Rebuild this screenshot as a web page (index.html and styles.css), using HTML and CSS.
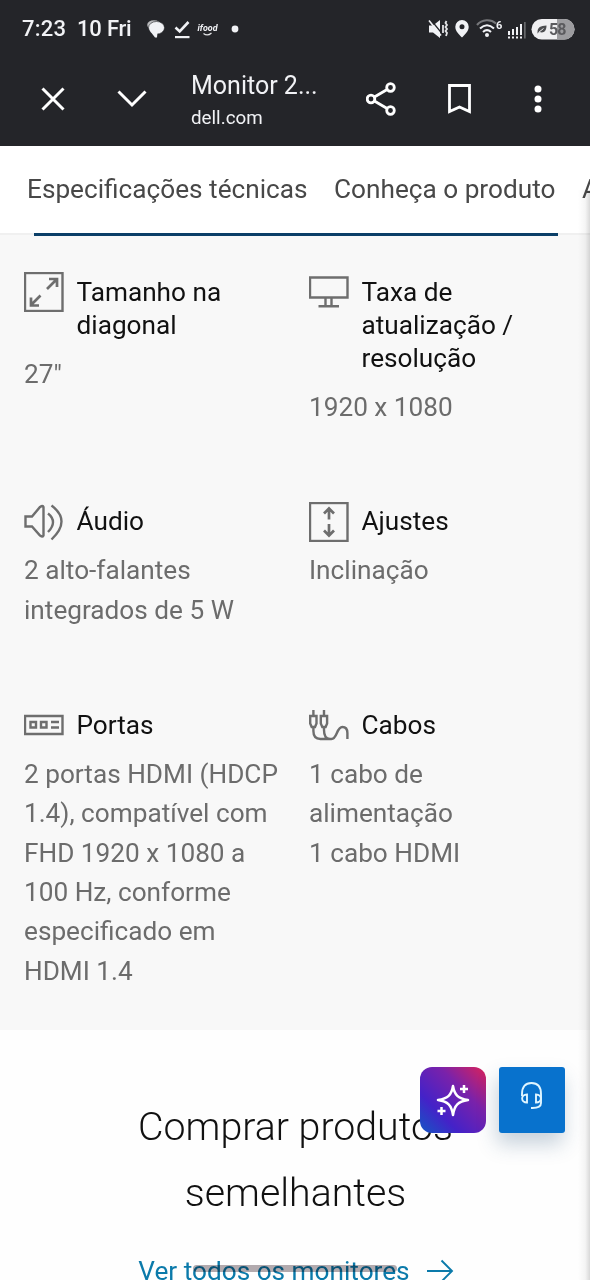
FILE: index.html
```html
<!DOCTYPE html>
<html lang="pt-BR">
<head>
<meta charset="utf-8">
<title>Monitor 27</title>
<link rel="stylesheet" href="styles.css">
</head>
<body>
<div class="screen">
  <header class="chrome">
    <div class="status">
      <span class="clock">7:23</span>
      <span class="date">10 Fri</span>
      <svg class="notif" width="96" height="24" viewBox="0 0 96 24" fill="#f1f2f5">
        <ellipse cx="9" cy="9" rx="6.800" ry="4.800" fill="#b9babc"/>
        <ellipse cx="11.500" cy="11.800" rx="8" ry="6.300" stroke="#242529" stroke-width=".6"/>
        <path d="M5 15l5 6.500h2l.5-5z"/>
        <path d="M30.500 11.500l4.200 4L43.500 6" fill="none" stroke="#f1f2f5" stroke-width="2.600"/>
        <rect x="30" y="20" width="14.500" height="2.200"/>
        <text class="ifood" x="52.500" y="15" textLength="20" lengthAdjust="spacingAndGlyphs">ifood</text>
        <path d="M58.500 17.500q4 3.200 8-.5" fill="none" stroke="#e2e3e5" stroke-width="1.200"/>
        <circle cx="90" cy="13" r="3.400"/>
      </svg>
      <svg class="system" width="148" height="24" viewBox="0 0 148 24" fill="#f1f2f5">
        <path d="M2 9.500h4l7-5.500v18l-7-5.500H2z"/>
        <path d="M4 4l11 13.500" stroke="#242529" stroke-width="1.200"/>
        <path d="M2 4.500l12 15" stroke="#f1f2f5" stroke-width="1.600"/>
        <path d="M16 9v8M19.500 5l-1 2 1.500 2-1.500 2 1.500 2-1.500 2 1.500 2-1 3" fill="none" stroke="#e2e3e5" stroke-width="1.800"/>
        <path fill-rule="evenodd" d="M35 4a6.700 6.700 0 0 1 6.700 6.700c0 4.500-4 8-6.700 10.800-2.700-2.800-6.700-6.300-6.700-10.800A6.700 6.700 0 0 1 35 4zm0 4.200a2.500 2.500 0 1 0 0 5 2.500 2.500 0 0 0 0-5z"/>
        <g fill="none" stroke-width="2.100"><path d="M50 9C55 3 64 3 69 7.500" stroke="#77787b"/><path d="M53 12.500q7-6.500 14 0M56 16q4-3.600 8 0" stroke="#f1f2f5"/></g>
        <circle cx="60" cy="19" r="2"/>
        <text class="wifi-six" x="69" y="12.500" textLength="6.500">6</text>
        <path d="M81 15h2v4h-2zM85 13h2v6h-2zM89 11h2v8h-2zM93 8h2v11h-2zM81 20.500h2v2h-2zM85 20.500h2v2h-2zM89 20.500h2v2h-2zM93 20.500h2v2h-2z"/>
        <path d="M97 6h1.700v16.500H97z" fill="#66676a"/>
        <rect x="104.500" y="3" width="43" height="20.500" rx="10.200" fill="#efeff1"/>
        <path d="M130 3h7.300a10.200 10.200 0 0 1 0 20.500H130z" fill="#9c9c9f"/>
        <path d="M110.500 16c0-5 3-6 9-6.500 0 6-3 8-7 6.500l-2 1.500z" fill="#4c4d50"/>
        <path d="M111.500 16.500l5-4" stroke="#efeff1"/>
        <text class="battery" x="122" y="19" textLength="17.500">58</text>
      </svg>
    </div>
    <div class="toolbar">
      <svg class="nav-icons" width="110" height="40" viewBox="0 0 110 40" fill="none" stroke="#fff" stroke-width="3">
        <path d="M2.500 9.500L23.500 30.500M23.500 9.500L2.500 30.500"/><path d="M78.500 12.500L92 26l13.500-13.500"/>
      </svg>
      <div class="page-info"><div class="page-title">Monitor 2...</div><div class="page-host">dell.com</div></div>
      <svg class="actions" width="180" height="40" viewBox="0 0 180 40" fill="none" stroke="#fff" stroke-width="2.800">
        <path d="M5 20L24.500 8.500M5 20l19.500 11.500"/>
        <g fill="#242529"><circle cx="24.500" cy="8.500" r="3.800"/><circle cx="5" cy="20" r="3.800"/><circle cx="24.500" cy="31.500" r="3.800"/></g>
        <path d="M83.500 6.500h20v26l-10-4.500-10 4.500z"/>
        <g fill="#fff" stroke="none"><circle cx="172" cy="10" r="3.500"/><circle cx="172" cy="20" r="3.500"/><circle cx="172" cy="30" r="3.500"/></g>
      </svg>
    </div>
  </header>
  <nav class="tabs">
    <span class="tab">Especificações técnicas</span><span class="tab">Conheça o produto</span><span class="tab">A</span>
    <div class="indicator"></div>
  </nav>
  <main class="specs">
    <section class="spec">
      <div class="head"><svg class="icon" viewBox="0 0 40 40"><rect x="1" y="1" width="37.500" height="38"/><path d="M23 17L32.500 7.500M25 7h8v8M16.500 23.500L7 33M7 25.500v8h8" stroke-width="2.700"/></svg><h2>Tamanho na diagonal</h2></div>
      <p>27"</p>
    </section>
    <section class="spec">
      <div class="head"><svg class="icon" viewBox="0 0 40 40"><path d="M1 5.500h37.500v20H1zM16.500 26v8M22.500 26v8M9.500 34.200h20.500"/></svg><h2>Taxa de atualização / resolução</h2></div>
      <p>1920 x 1080</p>
    </section>
    <section class="spec">
      <div class="head"><svg class="icon" viewBox="0 0 40 40"><path d="M1.500 14.500H8L16 5q3-2 3.500 0v28.500q-.5 2-3.500 0L8 24.500H1.500zM24 11.500q10 8 0 18.500M27.500 3.500q20 15 0 34"/></svg><h2>Áudio</h2></div>
      <p>2 alto-falantes<br>integrados de 5 W</p>
    </section>
    <section class="spec">
      <div class="head"><svg class="icon" viewBox="0 0 40 40"><rect x="1" y="1" width="37.500" height="38"/><path d="M20 17.500V7M15 11.500L20 6.500l5 5M20 22v11.500M15 28.500l5 5 5-5" stroke-width="2.700"/></svg><h2>Ajustes</h2></div>
      <p>Inclinação</p>
    </section>
    <section class="spec">
      <div class="head"><svg class="icon" viewBox="0 0 40 40"><path d="M1 11h37.500v18H1zM6.500 17h5.500v5.500H6.500zM17 17h5.500v5.500h-5.500zM27 17h8M27 22.500h8"/></svg><h2>Portas</h2></div>
      <p>2 portas HDMI (HDCP<br>1.4), compatível com<br>FHD 1920 x 1080 a<br>100 Hz, conforme<br>especificado em<br>HDMI 1.4</p>
    </section>
    <section class="spec">
      <div class="head"><svg class="icon" viewBox="0 0 40 40"><path d="M1.200 11h6.300v7.500L6 22H2.700l-1.500-3.500zM11.800 11h6.300v7.500L16.600 22h-3.300l-1.500-3.500zM4.400 5v6M15 5v6M4.400 22v4q0 8 7 8h11c6 0 5-12 11-12q5 0 5 6v6M15 22v3q0 9 6 9"/></svg><h2>Cabos</h2></div>
      <p>1 cabo de<br>alimentação<br>1 cabo HDMI</p>
    </section>
  </main>
  <section class="similar">
    <h3>Comprar produtos<br>semelhantes</h3>
    <a class="all-link"><span>Ver todos os monitores</span><svg width="28" height="24" viewBox="0 0 28 24" fill="none" stroke="#0b7aaa" stroke-width="1.900"><path d="M1 12h25M15.500 1.500L26 12 15.500 22.500"/></svg></a>
  </section>
  <div class="page-edge"></div>
  <div class="floating">
    <div class="ai-button"><svg width="66" height="66" viewBox="0 0 66 66" fill="none" stroke="#fff" stroke-width="2.500" stroke-linejoin="round"><path d="M33 19C34.500 28 38 31.500 48 33c-10 1.500-13.500 5-15 15-1.500-10-5-13.500-15-15 10-1.500 13.500-5 15-14z"/><path d="M44 18v8M40 22h8M21.500 40v8M17.500 44h8"/></svg></div>
    <div class="support-button"><svg width="66" height="66" viewBox="0 0 66 66" fill="none" stroke="#dff5ff" stroke-width="1.900"><path d="M23 29v-2q0-11 9.500-11T42 27v9q0 5-8.500 5H32"/><path d="M28 27.500v8c-6.500 0-6.500-8 0-8zM37 27.500v8c6.500 0 6.500-8 0-8z"/></svg></div>
  </div>
  <div class="gesture"></div>
</div>
</body>
</html>
```

FILE: styles.css
```css
* { box-sizing: border-box; }
body { margin: 0; font-family: Roboto, "Liberation Sans", sans-serif; }
.screen { position: relative; width: 590px; height: 1280px; overflow: hidden; background: #fefefe; display: flex; flex-direction: column; }
.chrome { height: 146px; flex: none; background: #242529; color: #f1f2f5; }
.status { height: 54px; padding: 2px 15px 0 22px; display: flex; align-items: center; font-size: 22px; font-weight: 500; }
.clock { width: 55px; letter-spacing: .2px; }
.date { width: 68px; white-space: nowrap; letter-spacing: -.2px; }
.system { margin-left: auto; }
.ifood { font: italic bold 9px Roboto, sans-serif; }
.wifi-six { font: bold 11px Roboto, sans-serif; }
.battery { font: bold 16px Roboto, sans-serif; fill: #5b5b5e; }
.toolbar { height: 90px; padding-left: 40px; display: flex; align-items: center; }
.page-info { width: 175px; margin-left: 41px; padding-top: 5px; }
.page-title { font-size: 25px; line-height: 33px; white-space: nowrap; }
.page-host { font-size: 18.8px; line-height: 32px; }
.tabs { position: relative; height: 89px; flex: none; display: flex; padding: 23px 0 0 27px; gap: 26.5px; background: #fff; border-bottom: 2px solid #f0f0f0; color: #484848; font-size: 26.2px; line-height: 40px; white-space: nowrap; }
.indicator { position: absolute; left: 34px; top: 87px; width: 524px; height: 3px; background: #0b3f68; }
.specs { flex: none; height: 795px; padding: 37px 24px 0; background: #f8f8f8; display: grid; grid-template-columns: 261px 257px; column-gap: 24px; row-gap: 75px; align-content: start; }
.head { display: flex; gap: 12.5px; margin-bottom: 9.5px; }
.icon { width: 40px; height: 40px; flex: none; fill: none; stroke: #6e6e6e; stroke-width: 2.4; }
h2 { margin: 0; padding: 3.5px 0 3.5px; font-size: 26.2px; font-weight: 400; line-height: 33px; color: #111; max-width: 170px; }
.spec p { margin: 0; font-size: 26.2px; line-height: 39.4px; color: #6c6c6c; white-space: nowrap; }
.similar { flex: none; padding-top: 65px; text-align: center; }
h3 { margin: 0; font-size: 39.3px; font-weight: 300; line-height: 65.5px; color: #111; padding-left: 1px; }
.all-link { display: flex; justify-content: center; align-items: center; gap: 16px; margin-top: 25px; padding-left: 2px; font-size: 26.2px; line-height: 40px; color: #0b7aaa; }
.page-edge { position: absolute; top: 190px; right: 0; width: 12px; height: 1090px; background: linear-gradient(90deg, rgba(0,0,0,0), rgba(0,0,0,.04) 60%, rgba(0,0,0,.15)); }
.floating { position: absolute; left: 420px; top: 1067px; display: flex; gap: 13px; }
.ai-button { width: 66px; height: 66px; border-radius: 12px; background: linear-gradient(45deg, #1457c4 0%, #4422c8 30%, #7a22aa 65%, #db2259 100%); }
.support-button { width: 66px; height: 66px; border-radius: 3px; background: #0872cd; box-shadow: -2px 11px 20px rgba(40,80,120,.26); }
.support-button svg, .ai-button svg { display: block; }
.gesture { position: absolute; left: 193px; top: 1265px; width: 204px; height: 7px; border-radius: 4px; background: #b3abaf; mix-blend-mode: multiply; }
```
